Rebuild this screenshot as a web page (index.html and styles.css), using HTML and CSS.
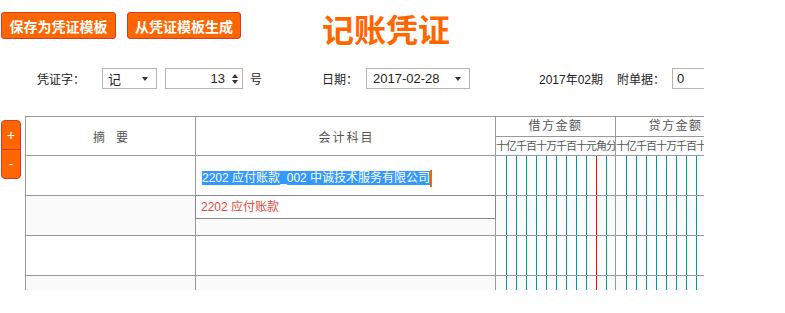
FILE: index.html
```html
<!DOCTYPE html>
<html lang="zh-CN">
<head>
    <meta charset="UTF-8">
    <meta name="viewport" content="width=device-width, initial-scale=1.0">
    <title>记账凭证</title>
    <link rel="stylesheet" href="styles.css">
</head>
<body>
    <div class="page">
        <div class="toolbar">
            <button class="btn btn-save">保存为凭证模板</button>
            <button class="btn btn-load">从凭证模板生成</button>
            <h1 class="title">记账凭证</h1>
        </div>

        <div class="meta">
            <span class="lbl lbl-word">凭证字：</span>
            <div class="box sel-word">记<i class="caret"></i></div>
            <div class="box num">13<span class="spin"><i class="up"></i><i class="down"></i></span></div>
            <span class="lbl unit">号</span>
            <span class="lbl lbl-date">日期：</span>
            <div class="box sel-date">2017-02-28<i class="caret"></i></div>
            <span class="lbl period">2017年02期</span>
            <span class="lbl lbl-attach">附单据：</span>
            <div class="box attach">0</div>
        </div>

        <div class="voucher">
            <div class="side">
                <button class="add">+</button>
                <button class="del">-</button>
            </div>
            <div class="grid">
                <div class="row head">
                    <div class="cell c-sum">摘要</div>
                    <div class="cell c-acc">会计科目</div>
                    <div class="cell c-amt">
                        <div class="amt-title">借方金额</div>
                        <div class="digits">十亿千百十万千百十元角分</div>
                    </div>
                    <div class="cell c-amt">
                        <div class="amt-title">贷方金额</div>
                        <div class="digits">十亿千百十万千百十元角分</div>
                    </div>
                </div>
                <div class="row line">
                    <div class="cell c-sum"></div>
                    <div class="cell c-acc"><span class="picked">2202 应付账款_002 中诚技术服务有限公司</span><i class="cursor"></i></div>
                    <div class="cell c-amt money"></div>
                    <div class="cell c-amt money"></div>
                </div>
                <div class="row line odd">
                    <div class="cell c-sum"></div>
                    <div class="cell c-acc">
                        <div class="suggest">2202 应付账款</div>
                    </div>
                    <div class="cell c-amt money"></div>
                    <div class="cell c-amt money"></div>
                </div>
                <div class="row line">
                    <div class="cell c-sum"></div>
                    <div class="cell c-acc"></div>
                    <div class="cell c-amt money"></div>
                    <div class="cell c-amt money"></div>
                </div>
                <div class="row line odd">
                    <div class="cell c-sum"></div>
                    <div class="cell c-acc"></div>
                    <div class="cell c-amt money"></div>
                    <div class="cell c-amt money"></div>
                </div>
            </div>
        </div>
    </div>
</body>
</html>
```

FILE: styles.css
```css
body {
    margin: 0;
    font-family: "Liberation Sans", "Noto Sans CJK SC", sans-serif;
    font-size: 12px;
    color: #222;
    background: #fff;
}
.page {
    width: 704px;
    height: 290px;
    overflow: hidden;
}

/* top bar */
.toolbar {
    display: flex;
    align-items: flex-start;
    height: 32px;
    padding: 12px 0 0 1px;
}
.btn {
    height: 27px;
    padding: 0;
    border: 1px solid #c9402a;
    border-radius: 3px;
    background: #f60;
    color: #fff;
    font: bold 14px "Noto Sans CJK SC", sans-serif;
    cursor: pointer;
}
.btn-save {
    width: 115px;
}
.btn-load {
    width: 114px;
    margin-left: 11px;
}
.title {
    margin: 0 0 0 81px;
    font: bold 32px/32px "Noto Sans CJK SC", sans-serif;
    color: #f60;
}

/* voucher info */
.meta {
    display: flex;
    align-items: center;
    height: 21px;
    margin-top: 24px;
}
.lbl {
    flex-shrink: 0;
    white-space: nowrap;
}
.lbl-word {
    width: 65px;
    margin-left: 37px;
}
.unit {
    width: 72px;
    margin-left: 7px;
}
.lbl-date {
    width: 44px;
}
.period {
    width: 78px;
    margin-left: 69px;
}
.lbl-attach {
    width: 55px;
}
.box {
    position: relative;
    flex-shrink: 0;
    display: flex;
    align-items: center;
    box-sizing: border-box;
    height: 21px;
    padding: 0 5px;
    border: 1px solid #b5b5b5;
    background: #fff;
    font-size: 13px;
}
.sel-word {
    width: 55px;
    margin-right: 8px;
}
.sel-date {
    width: 104px;
    padding-left: 6px;
}
.num {
    width: 78px;
    justify-content: flex-end;
    padding-right: 4px;
}
.attach {
    width: 60px;
    padding-left: 4px;
}
.caret {
    margin-left: auto;
    margin-right: 3px;
    border-left: 3.5px solid transparent;
    border-right: 3.5px solid transparent;
    border-top: 4px solid #333;
}
.spin {
    display: flex;
    flex-direction: column;
    gap: 2px;
    margin-left: 7px;
}
.spin i {
    border-left: 3.5px solid transparent;
    border-right: 3.5px solid transparent;
}
.spin .up {
    border-bottom: 4px solid #333;
}
.spin .down {
    border-top: 4px solid #333;
}

/* voucher table */
.voucher {
    display: flex;
    align-items: flex-start;
    margin-top: 27px;
}
.side {
    display: flex;
    flex-direction: column;
    width: 20px;
    margin: 4px 0 0 1px;
}
.side button {
    height: 30px;
    padding: 0;
    border: 1px solid #c9402a;
    background: #f60;
    color: #fff;
    font: 14px "Liberation Sans", sans-serif;
}
.side .add {
    border-radius: 4px 4px 0 0;
}
.side .del {
    margin-top: -1px;
    border-radius: 0 0 4px 4px;
}
.grid {
    flex-shrink: 0;
    box-sizing: border-box;
    width: 679px;
    height: 174px;
    margin-left: 4px;
    overflow: hidden;
    border-top: 1px solid #999;
    border-left: 1px solid #999;
}
.row {
    display: flex;
    width: max-content;
    box-sizing: border-box;
    border-bottom: 1px solid #999;
}
.head {
    height: 39px;
    color: #555;
}
.line {
    height: 40px;
}
.odd {
    background: #fafafa;
}
.cell {
    flex-shrink: 0;
    box-sizing: border-box;
    border-right: 1px solid #999;
}
.c-sum {
    width: 170px;
}
.c-acc {
    position: relative;
    width: 300px;
}
.c-amt {
    width: 120px;
    display: flex;
    flex-direction: column;
}
.head .c-sum,
.head .c-acc {
    display: flex;
    align-items: center;
    justify-content: center;
    font-size: 12px;
}
.head .c-sum {
    letter-spacing: 11px;
    padding-left: 11px;
}
.head .c-acc {
    letter-spacing: 2px;
    padding-left: 2px;
}
.amt-title {
    box-sizing: border-box;
    height: 20px;
    line-height: 19px;
    border-bottom: 1px solid #999;
    text-align: center;
    letter-spacing: 1.5px;
}
.digits {
    flex: 1;
    line-height: 18px;
    font-size: 11px;
    letter-spacing: -1px;
    white-space: nowrap;
    overflow: hidden;
}
/* one teal line per digit, red line between 元 and 角 */
.money {
    padding-left: 10px;
    background-image:
        linear-gradient(90deg, #f00 1px, transparent 1px),
        linear-gradient(90deg, #099 1px, transparent 1px);
    background-size: 10px 100%, 10px 100%;
    background-position: 90px 0, 0 0;
    background-repeat: no-repeat, repeat-x;
    background-origin: content-box;
    background-clip: content-box;
}
.line .c-acc {
    padding: 14px 0 0 6px;
    line-height: 17px;
    white-space: nowrap;
}
.picked {
    background: #3399ff;
    color: #fff;
}
.cursor {
    display: inline-block;
    width: 2px;
    height: 17px;
    vertical-align: top;
    background: #e86a10;
}
.suggest {
    position: absolute;
    top: -1px;
    left: -1px;
    right: -1px;
    box-sizing: border-box;
    height: 24px;
    padding-left: 5px;
    line-height: 22px;
    border: 1px solid #888;
    background: #fff;
    color: #e5483f;
}
```
